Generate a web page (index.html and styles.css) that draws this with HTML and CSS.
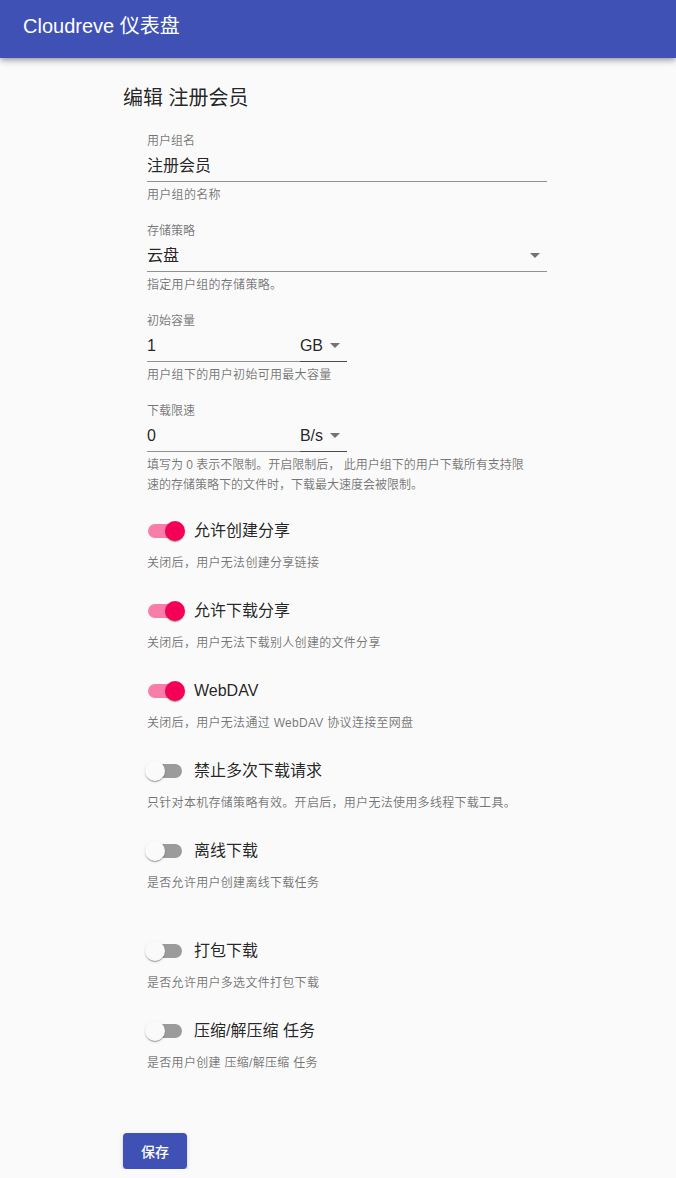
FILE: index.html
```html
<!DOCTYPE html>
<html lang="zh-CN">
<head>
<meta charset="utf-8">
<title>Cloudreve 仪表盘</title>
<link rel="stylesheet" href="styles.css">
</head>
<body>
<header class="appbar">
  <h1 class="brand">Cloudreve 仪表盘</h1>
</header>
<main class="content">
  <h2 class="page-title">编辑 注册会员</h2>
  <form class="form">
    <section class="fields">
      <div class="field">
        <label class="field-label">用户组名</label>
        <div class="input-row">
          <div class="input grow">注册会员</div>
        </div>
        <p class="helper">用户组的名称</p>
      </div>
      <div class="field">
        <label class="field-label">存储策略</label>
        <div class="input-row">
          <div class="select grow"><span>云盘</span><svg class="arrow" viewBox="0 0 24 24"><path d="M7 10l5 5 5-5z"/></svg></div>
        </div>
        <p class="helper">指定用户组的存储策略。</p>
      </div>
      <div class="field">
        <label class="field-label">初始容量</label>
        <div class="input-row compact">
          <div class="input grow">1</div>
          <div class="select unit"><span>GB</span><svg class="arrow" viewBox="0 0 24 24"><path d="M7 10l5 5 5-5z"/></svg></div>
        </div>
        <p class="helper">用户组下的用户初始可用最大容量</p>
      </div>
      <div class="field">
        <label class="field-label">下载限速</label>
        <div class="input-row compact">
          <div class="input grow">0</div>
          <div class="select unit"><span>B/s</span><svg class="arrow" viewBox="0 0 24 24"><path d="M7 10l5 5 5-5z"/></svg></div>
        </div>
        <p class="helper helper-long">填写为 0 表示不限制。开启限制后， 此用户组下的用户下载所有支持限<br>速的存储策略下的文件时，下载最大速度会被限制。</p>
      </div>
    </section>
    <section class="toggles">
      <div class="toggle">
        <div class="toggle-row">
          <span class="switch on"><span class="track"></span><span class="thumb"></span></span>
          <span class="toggle-label">允许创建分享</span>
        </div>
        <p class="helper">关闭后，用户无法创建分享链接</p>
      </div>
      <div class="toggle">
        <div class="toggle-row">
          <span class="switch on"><span class="track"></span><span class="thumb"></span></span>
          <span class="toggle-label">允许下载分享</span>
        </div>
        <p class="helper">关闭后，用户无法下载别人创建的文件分享</p>
      </div>
      <div class="toggle">
        <div class="toggle-row">
          <span class="switch on"><span class="track"></span><span class="thumb"></span></span>
          <span class="toggle-label">WebDAV</span>
        </div>
        <p class="helper">关闭后，用户无法通过 WebDAV 协议连接至网盘</p>
      </div>
      <div class="toggle">
        <div class="toggle-row">
          <span class="switch"><span class="track"></span><span class="thumb"></span></span>
          <span class="toggle-label">禁止多次下载请求</span>
        </div>
        <p class="helper">只针对本机存储策略有效。开启后，用户无法使用多线程下载工具。</p>
      </div>
      <div class="toggle">
        <div class="toggle-row">
          <span class="switch"><span class="track"></span><span class="thumb"></span></span>
          <span class="toggle-label">离线下载</span>
        </div>
        <p class="helper">是否允许用户创建离线下载任务</p>
      </div>
      <div class="toggle spaced">
        <div class="toggle-row">
          <span class="switch"><span class="track"></span><span class="thumb"></span></span>
          <span class="toggle-label">打包下载</span>
        </div>
        <p class="helper">是否允许用户多选文件打包下载</p>
      </div>
      <div class="toggle">
        <div class="toggle-row">
          <span class="switch"><span class="track"></span><span class="thumb"></span></span>
          <span class="toggle-label">压缩/解压缩 任务</span>
        </div>
        <p class="helper">是否用户创建 压缩/解压缩 任务</p>
      </div>
    </section>
  </form>
  <button class="btn" type="button">保存</button>
</main>
</body>
</html>
```

FILE: styles.css
```css
* { box-sizing: border-box; }

html, body {
  margin: 0;
  padding: 0;
}

body {
  background: #fafafa;
  font-family: "Liberation Sans", "Noto Sans CJK SC", sans-serif;
  color: rgba(0, 0, 0, 0.87);
}

.appbar {
  height: 58px;
  background: #3f51b5;
  color: #fff;
  display: flex;
  align-items: center;
  padding: 0 23px 6px;
  box-shadow: 0 2px 4px -1px rgba(0,0,0,0.2), 0 4px 5px 0 rgba(0,0,0,0.14), 0 1px 10px 0 rgba(0,0,0,0.12);
}

.brand {
  margin: 0;
  font-size: 20px;
  font-weight: 400;
  line-height: 28px;
}

.content {
  padding: 0 0 0 123px;
}

.page-title {
  margin: 26px 0 22px;
  font-size: 20px;
  font-weight: 400;
  line-height: 28px;
}

.form {
  padding-left: 24px;
  display: flex;
  flex-direction: column;
  gap: 17px;
}

.fields {
  display: flex;
  flex-direction: column;
  gap: 19px;
  width: 400px;
}

.field-label {
  display: block;
  height: 16px;
  font-size: 12px;
  line-height: 15px;
  color: rgba(0, 0, 0, 0.54);
}

.input-row {
  display: flex;
  height: 32px;
}

.input-row.compact {
  width: 200px;
}

.input, .select {
  height: 32px;
  padding: 6px 0 7px;
  font-size: 16px;
  line-height: 19px;
  border-bottom: 1px solid rgba(0, 0, 0, 0.42);
}

.grow { flex: 1; }

.select {
  display: flex;
  align-items: center;
  justify-content: space-between;
}

.select.unit {
  border-bottom-color: rgba(0, 0, 0, 0.7);
}

.arrow {
  width: 24px;
  height: 24px;
  fill: rgba(0, 0, 0, 0.54);
  flex: none;
}

.helper {
  margin: 3px 0 0;
  font-size: 12px;
  line-height: 20px;
  letter-spacing: 0.3px;
  color: rgba(0, 0, 0, 0.54);
}

.helper-long {
  letter-spacing: 0;
}

.toggles {
  display: flex;
  flex-direction: column;
  gap: 19px;
}

.toggle.spaced {
  margin-top: 20px;
}

.toggle-row {
  display: flex;
  align-items: center;
  height: 38px;
}

.switch {
  position: relative;
  width: 58px;
  height: 38px;
  padding: 12px;
  margin-left: -11px;
  flex: none;
}

.track {
  display: block;
  width: 34px;
  height: 14px;
  border-radius: 7px;
  background: #000;
  opacity: 0.38;
}

.thumb {
  position: absolute;
  top: 9px;
  left: 9px;
  width: 20px;
  height: 20px;
  border-radius: 50%;
  background: #fafafa;
  box-shadow: 0 2px 1px -1px rgba(0,0,0,0.2), 0 1px 1px 0 rgba(0,0,0,0.14), 0 1px 3px 0 rgba(0,0,0,0.12);
}

.switch.on .track {
  background: #f50057;
  opacity: 0.5;
}

.switch.on .thumb {
  left: 29px;
  background: #f50057;
}

.toggle-label {
  font-size: 16px;
  line-height: 24px;
}

.btn {
  margin-top: 60px;
  min-width: 64px;
  height: 36px;
  padding: 0 16px;
  border: 0;
  border-radius: 4px;
  background: #3f51b5;
  color: #fff;
  font-family: "Liberation Sans", "Noto Sans CJK SC", sans-serif;
  font-size: 14px;
  font-weight: 500;
  box-shadow: 0 3px 1px -2px rgba(0,0,0,0.2), 0 2px 2px 0 rgba(0,0,0,0.14), 0 1px 5px 0 rgba(0,0,0,0.12);
}
```
